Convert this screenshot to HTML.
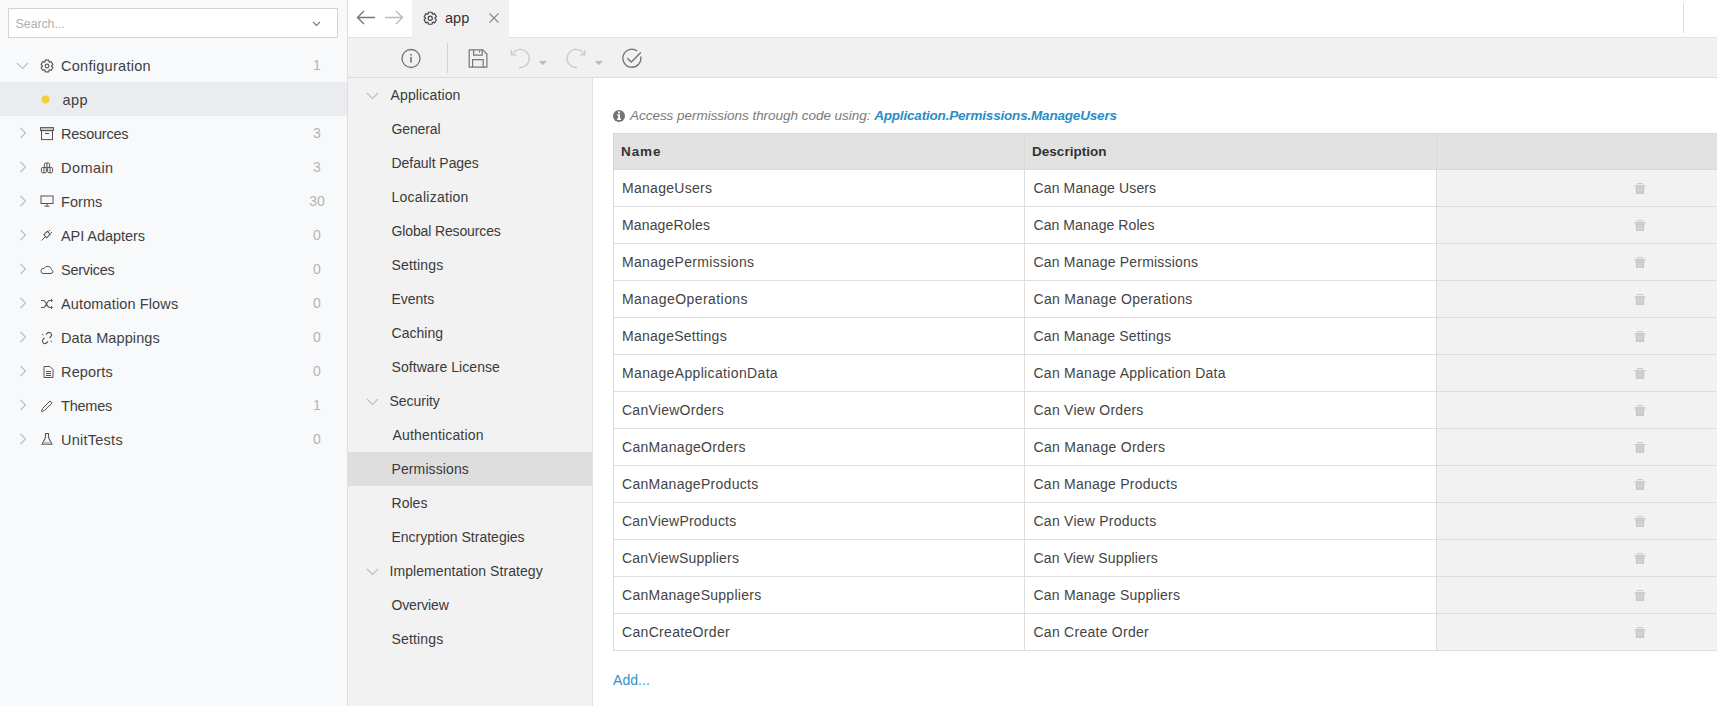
<!DOCTYPE html>
<html><head><meta charset="utf-8">
<style>
*{box-sizing:border-box;margin:0;padding:0}
html,body{width:1717px;height:706px;overflow:hidden;background:#fff;font-family:"Liberation Sans",sans-serif;color:#444}
.abs{position:absolute}
#side{position:absolute;left:0;top:0;width:348px;height:706px;background:#f8f9fb;border-right:1px solid #e0e0e0}
#search{position:absolute;left:8px;top:8px;width:330px;height:30px;border:1px solid #d4d4d4;background:#fff}
#search .ph{position:absolute;left:6.6px;top:1px;line-height:28px;font-size:12.5px;color:#b0b0b0}
.srow{position:absolute;left:0;width:347px;height:34px}
.srow .lbl{position:absolute;left:61px;top:0;line-height:34px;font-size:14.5px;color:#3f3f3f;white-space:nowrap;padding-top:1px}
.srow .cnt{position:absolute;left:297px;width:40px;text-align:center;top:0;line-height:34px;font-size:14px;color:#b4b4b4}
.srow svg{position:absolute}
#tabbar{position:absolute;left:348px;top:0;width:1369px;height:38px;background:#fff;border-bottom:1px solid #e2e2e2}
#tab{position:absolute;left:412px;top:0;width:97px;height:38px;background:#f1f1f1}
#toolbar{position:absolute;left:348px;top:38px;width:1369px;height:40px;background:#f1f1f1;border-bottom:1px solid #dcdcdc}
#nav{position:absolute;left:348px;top:78px;width:245px;height:628px;background:#f2f2f2;border-right:1px solid #e0e0e0}
.nrow{position:absolute;left:0;width:244px;height:34px}
.nrow .lbl{position:absolute;top:0;line-height:34px;font-size:14px;color:#3a3a3a;white-space:nowrap}
.nrow.sel{background:#dedede}
#thead{position:absolute;left:613px;top:133px;width:1104px;height:37px;background:#e2e2e2;border:1px solid #dadada;border-right:0}
#thead div{position:absolute;top:0;line-height:35px;font-size:13.5px;font-weight:bold;color:#333}
.tr{left:613px;width:1104px;height:37px;border-bottom:1px solid #dedede;border-left:1px solid #dedede}
.tr div{position:absolute;top:0;height:36px;line-height:36px;font-size:14px;color:#444;white-space:nowrap}
.tr .c1{left:8px}
.tr .c2{left:410px;border-left:1px solid #dedede;padding-left:8.5px;width:412px}
.tr .c3{left:822px;width:300px;background:#f2f2f2;border-left:1px solid #dedede}
#info{position:absolute;left:630px;top:105px;font-size:13.5px;font-style:italic;color:#7a7a7a;line-height:22px;white-space:nowrap}
#info b{color:#2a8dc8}
#add{position:absolute;left:613px;top:670px;font-size:14px;color:#3390cc;line-height:20px}
</style></head>
<body>
<div id="side">
  <div id="search"><div class="ph" style="letter-spacing:-0.125px">Search...</div>
    <svg class="abs" style="left:303px;top:12px" width="9" height="6" viewBox="0 0 9 6"><path d="M1 1 L4.5 4.5 L8 1" fill="none" stroke="#7a7a7a" stroke-width="1.1"/></svg>
  </div>
<div class="srow" style="top:48px"><svg width="13" height="8" viewBox="0 0 13 8" style="position:absolute;left:16px;top:14px"><path d="M1 1l5.5 5.5L12 1" fill="none" stroke="#bcc0ca" stroke-width="1.2"/></svg><svg width="14" height="14" viewBox="0 0 14 14" style="left:40px;top:11px"><path d="M4.96 2.99 L5.22 1.17 L8.78 1.17 L9.04 2.99 L9.45 3.23 L11.16 2.54 L12.94 5.63 L11.49 6.76 L11.49 7.24 L12.94 8.37 L11.16 11.46 L9.45 10.77 L9.04 11.01 L8.78 12.83 L5.22 12.83 L4.96 11.01 L4.55 10.77 L2.84 11.46 L1.06 8.37 L2.51 7.24 L2.51 6.76 L1.06 5.63 L2.84 2.54 L4.55 3.23Z" fill="none" stroke="#555" stroke-width="1.1" stroke-linejoin="round"/><circle cx="7" cy="7" r="1.9" fill="none" stroke="#555" stroke-width="1.1"/></svg><div class="lbl" style="letter-spacing:0.283px">Configuration</div><div class="cnt">1</div></div>
<div class="srow" style="top:82px;background:#ebecf0"><svg width="9" height="9" viewBox="0 0 9 9" style="left:41px;top:12.5px"><circle cx="4.5" cy="4.5" r="4" fill="#f2d033"/></svg><div class="lbl" style="left:62.5px;letter-spacing:0.45px">app</div></div>
<div class="srow" style="top:116px"><svg width="8" height="12" viewBox="0 0 8 12" style="position:absolute;left:19px;top:11px"><path d="M1.5 1l5 5-5 5" fill="none" stroke="#bcc0ca" stroke-width="1.2"/></svg><svg width="14" height="14" viewBox="0 0 14 14" style="left:40px;top:11px"><rect x="0.6" y="0.6" width="12.8" height="3" fill="#ccc" stroke="#555" stroke-width="1"/><rect x="1.5" y="3.6" width="11" height="9" fill="none" stroke="#555" stroke-width="1"/><path d="M5 6.5h4" stroke="#555" stroke-width="1"/></svg><div class="lbl" style="letter-spacing:-0.213px">Resources</div><div class="cnt">3</div></div>
<div class="srow" style="top:150px"><svg width="8" height="12" viewBox="0 0 8 12" style="position:absolute;left:19px;top:11px"><path d="M1.5 1l5 5-5 5" fill="none" stroke="#bcc0ca" stroke-width="1.2"/></svg><svg width="14" height="12" viewBox="0 0 14 12" style="left:40px;top:12px"><g fill="none" stroke="#555" stroke-width="1"><rect x="4.4" y="1" width="5.2" height="4.6" rx="1.4"/><path d="M7 1v4.6"/><rect x="1.4" y="5.4" width="5" height="5.4" rx="1.4"/><path d="M3.9 5.4v5.4"/><rect x="7.6" y="5.4" width="5" height="5.4" rx="1.4"/><path d="M10.1 5.4v5.4"/></g></svg><div class="lbl" style="letter-spacing:0.44px">Domain</div><div class="cnt">3</div></div>
<div class="srow" style="top:184px"><svg width="8" height="12" viewBox="0 0 8 12" style="position:absolute;left:19px;top:11px"><path d="M1.5 1l5 5-5 5" fill="none" stroke="#bcc0ca" stroke-width="1.2"/></svg><svg width="14" height="13" viewBox="0 0 14 13" style="left:40px;top:11px"><rect x="1" y="1" width="12" height="7.5" fill="none" stroke="#555" stroke-width="1"/><path d="M7 8.5v2.5M4.5 11.2h5" stroke="#555" stroke-width="1"/></svg><div class="lbl" style="letter-spacing:0.05px">Forms</div><div class="cnt">30</div></div>
<div class="srow" style="top:218px"><svg width="8" height="12" viewBox="0 0 8 12" style="position:absolute;left:19px;top:11px"><path d="M1.5 1l5 5-5 5" fill="none" stroke="#bcc0ca" stroke-width="1.2"/></svg><svg width="14" height="14" viewBox="0 0 14 14" style="left:40px;top:10px"><path d="M1.5 12.5L5 9" stroke="#555" stroke-width="1"/><rect x="5" y="4" width="4" height="5" transform="rotate(45 7 6.5)" fill="none" stroke="#555" stroke-width="1"/><path d="M8.5 3.5l1.5-1.5M10.5 5.5l1.5-1.5" stroke="#555" stroke-width="1"/></svg><div class="lbl" style="letter-spacing:-0.064px">API Adapters</div><div class="cnt">0</div></div>
<div class="srow" style="top:252px"><svg width="8" height="12" viewBox="0 0 8 12" style="position:absolute;left:19px;top:11px"><path d="M1.5 1l5 5-5 5" fill="none" stroke="#bcc0ca" stroke-width="1.2"/></svg><svg width="14" height="10" viewBox="0 0 14 10" style="left:40px;top:13px"><path d="M3 8.5h8a2 2 0 0 0 .5-3.9A4 4 0 0 0 4 3.5 2.5 2.5 0 0 0 3 8.5z" fill="none" stroke="#555" stroke-width="1"/></svg><div class="lbl" style="letter-spacing:-0.257px">Services</div><div class="cnt">0</div></div>
<div class="srow" style="top:286px"><svg width="8" height="12" viewBox="0 0 8 12" style="position:absolute;left:19px;top:11px"><path d="M1.5 1l5 5-5 5" fill="none" stroke="#bcc0ca" stroke-width="1.2"/></svg><svg width="14" height="12" viewBox="0 0 14 12" style="left:40px;top:12px"><path d="M1 2.5h2.5c2.5 0 3.5 7 6 7H12M1 9.5h2.5c2.5 0 3.5-7 6-7H12" fill="none" stroke="#555" stroke-width="1.1"/><path d="M11 0.8l2 1.7-2 1.7zM11 7.8l2 1.7-2 1.7z" fill="#555"/></svg><div class="lbl" style="letter-spacing:0.127px">Automation Flows</div><div class="cnt">0</div></div>
<div class="srow" style="top:320px"><svg width="8" height="12" viewBox="0 0 8 12" style="position:absolute;left:19px;top:11px"><path d="M1.5 1l5 5-5 5" fill="none" stroke="#bcc0ca" stroke-width="1.2"/></svg><svg width="14" height="14" viewBox="0 0 14 14" style="left:40px;top:11px"><path d="M6 3.5l1.5-1.5a2.5 2.5 0 0 1 3.5 3.5L9.5 7M4.5 7L3 8.5a2.5 2.5 0 0 0 3.5 3.5L8 10.5" fill="none" stroke="#555" stroke-width="1.1"/><path d="M10.5 10l1.5 1M2 3l1.5 1" stroke="#555" stroke-width="1"/></svg><div class="lbl" style="letter-spacing:0.1px">Data Mappings</div><div class="cnt">0</div></div>
<div class="srow" style="top:354px"><svg width="8" height="12" viewBox="0 0 8 12" style="position:absolute;left:19px;top:11px"><path d="M1.5 1l5 5-5 5" fill="none" stroke="#bcc0ca" stroke-width="1.2"/></svg><svg width="11" height="12" viewBox="0 0 11 12" style="left:42.5px;top:12px"><path d="M1 0.5h6l3 3v8h-9z" fill="none" stroke="#555" stroke-width="1"/><path d="M3 5.5h5M3 7.5h5M3 9.5h5" stroke="#555" stroke-width="1"/></svg><div class="lbl" style="letter-spacing:0.167px">Reports</div><div class="cnt">0</div></div>
<div class="srow" style="top:388px"><svg width="8" height="12" viewBox="0 0 8 12" style="position:absolute;left:19px;top:11px"><path d="M1.5 1l5 5-5 5" fill="none" stroke="#bcc0ca" stroke-width="1.2"/></svg><svg width="14" height="14" viewBox="0 0 14 14" style="left:40px;top:11px"><path d="M1.6 12.4l.9-2.9 7.6-7.6 2 2-7.6 7.6z" fill="none" stroke="#555" stroke-width="1" stroke-linejoin="round"/></svg><div class="lbl" style="letter-spacing:-0.22px">Themes</div><div class="cnt">1</div></div>
<div class="srow" style="top:422px"><svg width="8" height="12" viewBox="0 0 8 12" style="position:absolute;left:19px;top:11px"><path d="M1.5 1l5 5-5 5" fill="none" stroke="#bcc0ca" stroke-width="1.2"/></svg><svg width="14" height="14" viewBox="0 0 14 14" style="left:40px;top:10px"><path d="M5 1.5h4M5.5 1.5v4L2 12.5h10L8.5 5.5v-4" fill="none" stroke="#555" stroke-width="1.1" stroke-linejoin="round"/><path d="M3.5 10h7l1 2.5h-9z" fill="#bbb"/></svg><div class="lbl" style="letter-spacing:0.25px">UnitTests</div><div class="cnt">0</div></div>
</div>
<div id="tabbar">
  <svg class="abs" style="left:8px;top:10px" width="20" height="15" viewBox="0 0 20 15"><path d="M19 7.5H1.5M8 1L1.5 7.5 8 14" fill="none" stroke="#777" stroke-width="1.4"/></svg>
  <svg class="abs" style="left:36px;top:10px" width="20" height="15" viewBox="0 0 20 15"><path d="M1 7.5h17.5M12 1l6.5 6.5L12 14" fill="none" stroke="#bbb" stroke-width="1.4"/></svg>
  <div class="abs" style="left:1335px;top:3px;width:1px;height:30px;background:#dedede"></div>
</div>
<div id="tab">
  <svg class="abs" style="left:10.5px;top:10.5px" width="14.5" height="14.5" viewBox="0 0 14 14"><path d="M4.96 2.99 L5.22 1.17 L8.78 1.17 L9.04 2.99 L9.45 3.23 L11.16 2.54 L12.94 5.63 L11.49 6.76 L11.49 7.24 L12.94 8.37 L11.16 11.46 L9.45 10.77 L9.04 11.01 L8.78 12.83 L5.22 12.83 L4.96 11.01 L4.55 10.77 L2.84 11.46 L1.06 8.37 L2.51 7.24 L2.51 6.76 L1.06 5.63 L2.84 2.54 L4.55 3.23Z" fill="none" stroke="#444" stroke-width="1.1" stroke-linejoin="round"/><circle cx="7" cy="7" r="2" fill="none" stroke="#444" stroke-width="1.1"/></svg>
  <div class="abs" style="left:33px;top:0;line-height:36px;font-size:14.5px;color:#333">app</div>
  <svg class="abs" style="left:77px;top:13px" width="10" height="10" viewBox="0 0 10 10"><path d="M0.5 0.5l9 9M9.5 0.5l-9 9" stroke="#8a8a8a" stroke-width="1.1"/></svg>
</div>
<div id="toolbar"></div>
<svg class="abs" style="left:0;top:0" width="1717" height="78" viewBox="0 0 1717 78">
  <circle cx="411" cy="58.5" r="9" fill="none" stroke="#737373" stroke-width="1.3"/>
  <rect x="410.2" y="54" width="1.6" height="1.6" fill="#737373"/>
  <rect x="410.2" y="57" width="1.6" height="5.6" fill="#737373"/>
  <rect x="447" y="43" width="1" height="30" fill="#d2d2d2"/>
  <path d="M469.2 49.8h13.5l4.2 4.2v13.2h-17.7z" fill="none" stroke="#777" stroke-width="1.2"/>
  <path d="M473.6 49.8v5.4h8.6v-5.4" fill="none" stroke="#777" stroke-width="1.2"/>
  <path d="M479.5 50.5v2" stroke="#777" stroke-width="1.2"/>
  <path d="M472.6 67.2v-7.6h10.6v7.6" fill="none" stroke="#777" stroke-width="1.2"/>
  <path d="M512.6 53.8A9 9 0 1 1 519 67.4" fill="none" stroke="#c9c9c9" stroke-width="1.3"/>
  <path d="M511.4 50v4.8h5" fill="none" stroke="#c9c9c9" stroke-width="1.3"/>
  <path d="M538.7 61h8.3l-4.15 4.2z" fill="#bdbdbd"/>
  <path d="M583.6 53.8A9 9 0 1 0 577.2 67.4" fill="none" stroke="#c9c9c9" stroke-width="1.3"/>
  <path d="M584.8 50v4.8h-5" fill="none" stroke="#c9c9c9" stroke-width="1.3"/>
  <path d="M594.7 61h8.3l-4.15 4.2z" fill="#bdbdbd"/>
  <path d="M637.2 51A9 9 0 1 0 640.7 56.5" fill="none" stroke="#707070" stroke-width="1.3"/>
  <path d="M627.3 58.3l4 3.7 9.5-9.5" fill="none" stroke="#707070" stroke-width="1.3"/>
</svg>
<div id="nav">
<div class="nrow" style="top:0px"><svg width="13" height="8" viewBox="0 0 13 8" style="position:absolute;left:18px;top:14px"><path d="M1 1l5.5 5.5L12 1" fill="none" stroke="#bcc0ca" stroke-width="1.2"/></svg><div class="lbl" style="left:42.5px;letter-spacing:0.14px">Application</div></div>
<div class="nrow" style="top:34px"><div class="lbl" style="left:43.5px;letter-spacing:-0.133px">General</div></div>
<div class="nrow" style="top:68px"><div class="lbl" style="left:43.5px;letter-spacing:-0.05px">Default Pages</div></div>
<div class="nrow" style="top:102px"><div class="lbl" style="left:43.5px;letter-spacing:0.264px">Localization</div></div>
<div class="nrow" style="top:136px"><div class="lbl" style="left:43.5px;letter-spacing:-0.133px">Global Resources</div></div>
<div class="nrow" style="top:170px"><div class="lbl" style="left:43.5px;letter-spacing:0.157px">Settings</div></div>
<div class="nrow" style="top:204px"><div class="lbl" style="left:43.5px;letter-spacing:-0.02px">Events</div></div>
<div class="nrow" style="top:238px"><div class="lbl" style="left:43.5px;letter-spacing:0.017px">Caching</div></div>
<div class="nrow" style="top:272px"><div class="lbl" style="left:43.5px;letter-spacing:0.067px">Software License</div></div>
<div class="nrow" style="top:306px"><svg width="13" height="8" viewBox="0 0 13 8" style="position:absolute;left:18px;top:14px"><path d="M1 1l5.5 5.5L12 1" fill="none" stroke="#bcc0ca" stroke-width="1.2"/></svg><div class="lbl" style="left:41.5px;letter-spacing:-0.029px">Security</div></div>
<div class="nrow" style="top:340px"><div class="lbl" style="left:44.5px;letter-spacing:0.169px">Authentication</div></div>
<div class="nrow sel" style="top:374px"><div class="lbl" style="left:43.5px;letter-spacing:0.11px">Permissions</div></div>
<div class="nrow" style="top:408px"><div class="lbl" style="left:43.5px;letter-spacing:0.025px">Roles</div></div>
<div class="nrow" style="top:442px"><div class="lbl" style="left:43.5px;">Encryption Strategies</div></div>
<div class="nrow" style="top:476px"><svg width="13" height="8" viewBox="0 0 13 8" style="position:absolute;left:18px;top:14px"><path d="M1 1l5.5 5.5L12 1" fill="none" stroke="#bcc0ca" stroke-width="1.2"/></svg><div class="lbl" style="left:41.5px;letter-spacing:0.064px">Implementation Strategy</div></div>
<div class="nrow" style="top:510px"><div class="lbl" style="left:43.5px;letter-spacing:-0.143px">Overview</div></div>
<div class="nrow" style="top:544px"><div class="lbl" style="left:43.5px;letter-spacing:0.157px">Settings</div></div>
</div>
<svg class="abs" style="left:612px;top:109px" width="14" height="14" viewBox="0 0 14 14"><circle cx="7" cy="7" r="6" fill="#757575"/><circle cx="7" cy="3.4" r="1.1" fill="#fff"/><path d="M5.3 5.2h2.7v4.4h1v1.3H5.1V9.6h1V6.5h-.8z" fill="#fff"/></svg>
<div id="info"><span style="letter-spacing:-0.032px">Access permissions through code using:</span> <b style="letter-spacing:-0.185px">Application.Permissions.ManageUsers</b></div>
<div id="thead"><div style="left:7px;letter-spacing:0.9px">Name</div><div style="left:410px;width:412px;height:35px;border-left:1px solid #d8d8d8;padding-left:7px;letter-spacing:0.03px">Description</div><div style="left:822px;width:300px;height:35px;border-left:1px solid #d8d8d8"></div></div>
<div class="abs tr" style="top:170px"><div class="c1" style="letter-spacing:0.28px">ManageUsers</div><div class="c2" style="letter-spacing:0.133px">Can Manage Users</div><div class="c3"></div></div><svg width="12" height="12" viewBox="0 0 12 12" style="position:absolute;left:1634px;top:183px"><rect x="3.7" y="0.5" width="4.6" height="2" fill="none" stroke="#c9c9c9" stroke-width="1"/><rect x="0.6" y="2.1" width="10.8" height="1.6" fill="#c9c9c9"/><path d="M1.6 3.7h8.8l-.4 7.2h-8z" fill="#c9c9c9"/><path d="M4.6 5v4.8M7.4 5v4.8" stroke="#dedede" stroke-width="1"/></svg>
<div class="abs tr" style="top:207px"><div class="c1" style="letter-spacing:0.15px">ManageRoles</div><div class="c2" style="letter-spacing:0.073px">Can Manage Roles</div><div class="c3"></div></div><svg width="12" height="12" viewBox="0 0 12 12" style="position:absolute;left:1634px;top:220px"><rect x="3.7" y="0.5" width="4.6" height="2" fill="none" stroke="#c9c9c9" stroke-width="1"/><rect x="0.6" y="2.1" width="10.8" height="1.6" fill="#c9c9c9"/><path d="M1.6 3.7h8.8l-.4 7.2h-8z" fill="#c9c9c9"/><path d="M4.6 5v4.8M7.4 5v4.8" stroke="#dedede" stroke-width="1"/></svg>
<div class="abs tr" style="top:244px"><div class="c1" style="letter-spacing:0.325px">ManagePermissions</div><div class="c2" style="letter-spacing:0.2px">Can Manage Permissions</div><div class="c3"></div></div><svg width="12" height="12" viewBox="0 0 12 12" style="position:absolute;left:1634px;top:257px"><rect x="3.7" y="0.5" width="4.6" height="2" fill="none" stroke="#c9c9c9" stroke-width="1"/><rect x="0.6" y="2.1" width="10.8" height="1.6" fill="#c9c9c9"/><path d="M1.6 3.7h8.8l-.4 7.2h-8z" fill="#c9c9c9"/><path d="M4.6 5v4.8M7.4 5v4.8" stroke="#dedede" stroke-width="1"/></svg>
<div class="abs tr" style="top:281px"><div class="c1" style="letter-spacing:0.433px">ManageOperations</div><div class="c2" style="letter-spacing:0.31px">Can Manage Operations</div><div class="c3"></div></div><svg width="12" height="12" viewBox="0 0 12 12" style="position:absolute;left:1634px;top:294px"><rect x="3.7" y="0.5" width="4.6" height="2" fill="none" stroke="#c9c9c9" stroke-width="1"/><rect x="0.6" y="2.1" width="10.8" height="1.6" fill="#c9c9c9"/><path d="M1.6 3.7h8.8l-.4 7.2h-8z" fill="#c9c9c9"/><path d="M4.6 5v4.8M7.4 5v4.8" stroke="#dedede" stroke-width="1"/></svg>
<div class="abs tr" style="top:318px"><div class="c1" style="letter-spacing:0.269px">ManageSettings</div><div class="c2" style="letter-spacing:0.156px">Can Manage Settings</div><div class="c3"></div></div><svg width="12" height="12" viewBox="0 0 12 12" style="position:absolute;left:1634px;top:331px"><rect x="3.7" y="0.5" width="4.6" height="2" fill="none" stroke="#c9c9c9" stroke-width="1"/><rect x="0.6" y="2.1" width="10.8" height="1.6" fill="#c9c9c9"/><path d="M1.6 3.7h8.8l-.4 7.2h-8z" fill="#c9c9c9"/><path d="M4.6 5v4.8M7.4 5v4.8" stroke="#dedede" stroke-width="1"/></svg>
<div class="abs tr" style="top:355px"><div class="c1" style="letter-spacing:0.35px">ManageApplicationData</div><div class="c2" style="letter-spacing:0.262px">Can Manage Application Data</div><div class="c3"></div></div><svg width="12" height="12" viewBox="0 0 12 12" style="position:absolute;left:1634px;top:368px"><rect x="3.7" y="0.5" width="4.6" height="2" fill="none" stroke="#c9c9c9" stroke-width="1"/><rect x="0.6" y="2.1" width="10.8" height="1.6" fill="#c9c9c9"/><path d="M1.6 3.7h8.8l-.4 7.2h-8z" fill="#c9c9c9"/><path d="M4.6 5v4.8M7.4 5v4.8" stroke="#dedede" stroke-width="1"/></svg>
<div class="abs tr" style="top:392px"><div class="c1" style="letter-spacing:0.258px">CanViewOrders</div><div class="c2" style="letter-spacing:0.25px">Can View Orders</div><div class="c3"></div></div><svg width="12" height="12" viewBox="0 0 12 12" style="position:absolute;left:1634px;top:405px"><rect x="3.7" y="0.5" width="4.6" height="2" fill="none" stroke="#c9c9c9" stroke-width="1"/><rect x="0.6" y="2.1" width="10.8" height="1.6" fill="#c9c9c9"/><path d="M1.6 3.7h8.8l-.4 7.2h-8z" fill="#c9c9c9"/><path d="M4.6 5v4.8M7.4 5v4.8" stroke="#dedede" stroke-width="1"/></svg>
<div class="abs tr" style="top:429px"><div class="c1" style="letter-spacing:0.314px">CanManageOrders</div><div class="c2" style="letter-spacing:0.287px">Can Manage Orders</div><div class="c3"></div></div><svg width="12" height="12" viewBox="0 0 12 12" style="position:absolute;left:1634px;top:442px"><rect x="3.7" y="0.5" width="4.6" height="2" fill="none" stroke="#c9c9c9" stroke-width="1"/><rect x="0.6" y="2.1" width="10.8" height="1.6" fill="#c9c9c9"/><path d="M1.6 3.7h8.8l-.4 7.2h-8z" fill="#c9c9c9"/><path d="M4.6 5v4.8M7.4 5v4.8" stroke="#dedede" stroke-width="1"/></svg>
<div class="abs tr" style="top:466px"><div class="c1" style="letter-spacing:0.294px">CanManageProducts</div><div class="c2" style="letter-spacing:0.244px">Can Manage Products</div><div class="c3"></div></div><svg width="12" height="12" viewBox="0 0 12 12" style="position:absolute;left:1634px;top:479px"><rect x="3.7" y="0.5" width="4.6" height="2" fill="none" stroke="#c9c9c9" stroke-width="1"/><rect x="0.6" y="2.1" width="10.8" height="1.6" fill="#c9c9c9"/><path d="M1.6 3.7h8.8l-.4 7.2h-8z" fill="#c9c9c9"/><path d="M4.6 5v4.8M7.4 5v4.8" stroke="#dedede" stroke-width="1"/></svg>
<div class="abs tr" style="top:503px"><div class="c1" style="letter-spacing:0.229px">CanViewProducts</div><div class="c2" style="letter-spacing:0.244px">Can View Products</div><div class="c3"></div></div><svg width="12" height="12" viewBox="0 0 12 12" style="position:absolute;left:1634px;top:516px"><rect x="3.7" y="0.5" width="4.6" height="2" fill="none" stroke="#c9c9c9" stroke-width="1"/><rect x="0.6" y="2.1" width="10.8" height="1.6" fill="#c9c9c9"/><path d="M1.6 3.7h8.8l-.4 7.2h-8z" fill="#c9c9c9"/><path d="M4.6 5v4.8M7.4 5v4.8" stroke="#dedede" stroke-width="1"/></svg>
<div class="abs tr" style="top:540px"><div class="c1" style="letter-spacing:0.187px">CanViewSuppliers</div><div class="c2" style="letter-spacing:0.141px">Can View Suppliers</div><div class="c3"></div></div><svg width="12" height="12" viewBox="0 0 12 12" style="position:absolute;left:1634px;top:553px"><rect x="3.7" y="0.5" width="4.6" height="2" fill="none" stroke="#c9c9c9" stroke-width="1"/><rect x="0.6" y="2.1" width="10.8" height="1.6" fill="#c9c9c9"/><path d="M1.6 3.7h8.8l-.4 7.2h-8z" fill="#c9c9c9"/><path d="M4.6 5v4.8M7.4 5v4.8" stroke="#dedede" stroke-width="1"/></svg>
<div class="abs tr" style="top:577px"><div class="c1" style="letter-spacing:0.265px">CanManageSuppliers</div><div class="c2" style="letter-spacing:0.211px">Can Manage Suppliers</div><div class="c3"></div></div><svg width="12" height="12" viewBox="0 0 12 12" style="position:absolute;left:1634px;top:590px"><rect x="3.7" y="0.5" width="4.6" height="2" fill="none" stroke="#c9c9c9" stroke-width="1"/><rect x="0.6" y="2.1" width="10.8" height="1.6" fill="#c9c9c9"/><path d="M1.6 3.7h8.8l-.4 7.2h-8z" fill="#c9c9c9"/><path d="M4.6 5v4.8M7.4 5v4.8" stroke="#dedede" stroke-width="1"/></svg>
<div class="abs tr" style="top:614px"><div class="c1" style="letter-spacing:0.323px">CanCreateOrder</div><div class="c2" style="letter-spacing:0.26px">Can Create Order</div><div class="c3"></div></div><svg width="12" height="12" viewBox="0 0 12 12" style="position:absolute;left:1634px;top:627px"><rect x="3.7" y="0.5" width="4.6" height="2" fill="none" stroke="#c9c9c9" stroke-width="1"/><rect x="0.6" y="2.1" width="10.8" height="1.6" fill="#c9c9c9"/><path d="M1.6 3.7h8.8l-.4 7.2h-8z" fill="#c9c9c9"/><path d="M4.6 5v4.8M7.4 5v4.8" stroke="#dedede" stroke-width="1"/></svg>
<div id="add" style="letter-spacing:0.06px">Add...</div>
</body></html>
